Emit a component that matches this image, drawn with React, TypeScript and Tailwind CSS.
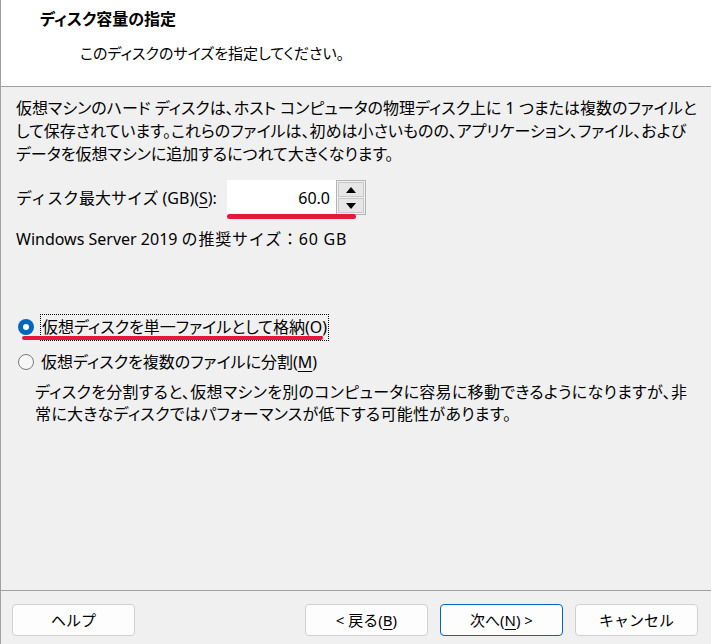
import React from "react";

const font = "font-['Noto_Sans','Noto_Sans_CJK_JP',sans-serif]";

function U({ children }: { children: React.ReactNode }) {
  return <span className="underline underline-offset-[3px] decoration-1">{children}</span>;
}

function Btn({ children, primary }: { children: React.ReactNode; primary?: boolean }) {
  return (
    <div
      className={
        "w-[123px] h-[32px] rounded-[4px] bg-[#fdfdfd] flex items-center justify-center text-[15px] text-black " +
        (primary ? "border border-[#0067c0]" : "border border-[#d0d0d0]")
      }
    >
      {children}
    </div>
  );
}

export default function App() {
  return (
    <div className={"w-[711px] h-[644px] bg-[#f0f0f0] flex flex-col border-l border-[#a0a0a0] text-black overflow-hidden " + font}>
      {/* header */}
      <div className="h-[87px] bg-white border-b border-[#a0a0a0] shrink-0">
        <div className="pl-[39px] pt-[7px] text-[16px] font-bold leading-[24px] [font-feature-settings:'palt']">
          ディスク容量の指定
        </div>
        <div className="pl-[79px] pt-[11px] text-[15px] leading-[22px] [font-feature-settings:'palt']">
          このディスクのサイズを指定してください。
        </div>
      </div>

      {/* body */}
      <div className="flex-1 flex flex-col px-[15px] text-[16px] [font-feature-settings:'palt']">
        <div className="mt-[10px] leading-[23px] whitespace-nowrap">
          <div>仮想マシンのハード ディスクは、ホスト コンピュータの物理ディスク上に 1 つまたは複数のファイルと</div>
          <div>して保存されています。これらのファイルは、初めは小さいものの、アプリケーション、ファイル、および</div>
          <div>データを仮想マシンに追加するにつれて大きくなります。</div>
        </div>

        <div className="mt-[14px] h-[36px] flex items-center">
          <span className="w-[211px] leading-[23px] whitespace-nowrap [font-feature-settings:normal]">
            ディスク最大サイズ (GB)(<U>S</U>):
          </span>
          <div className="relative flex h-[36px]">
            <div className="w-[109px] h-[35px] bg-white flex items-center justify-end pr-[6px] text-[16px]">60.0</div>
            <div className="w-[30px] h-[35px] border border-[#b4b4b4] bg-[#f0f0f0] flex flex-col p-[1px] gap-[1px]">
              <div className="flex-1 bg-[#e6e6e6] border border-[#c8c8c8] flex items-center justify-center">
                <svg width="10" height="6" viewBox="0 0 10 6"><path d="M0 6 L5 0 L10 6 Z" fill="#000" /></svg>
              </div>
              <div className="flex-1 bg-[#e6e6e6] border border-[#c8c8c8] flex items-center justify-center">
                <svg width="10" height="6" viewBox="0 0 10 6"><path d="M0 0 L5 6 L10 0 Z" fill="#000" /></svg>
              </div>
            </div>
            <div className="absolute left-0 top-[34px] w-[129px] h-[5px] rounded-full bg-[#e5173a]" />
          </div>
        </div>

        <div className="mt-[12px] leading-[23px] whitespace-nowrap [font-feature-settings:normal]">
          Windows Server 2019 <span className="tracking-[0.8px]">の推奨サイズ：60 GB</span>
        </div>

        <div className="mt-[62px] h-[28px] flex items-center relative">
          <div className="ml-[2px] w-[16px] h-[16px] rounded-full bg-[#0067c0] flex items-center justify-center">
            <div className="w-[6px] h-[6px] rounded-full bg-white" />
          </div>
          <div className="ml-[6px] h-[27px] px-[1px] border border-dotted border-black flex items-center leading-[23px]">
            仮想ディスクを単一ファイルとして格納(<U>O</U>)
          </div>
          <div className="absolute left-[6px] top-[23px] w-[301px] h-[4px] rounded-full bg-[#e5173a]" />
        </div>

        <div className="mt-[7px] h-[28px] flex items-center">
          <div className="ml-[2px] w-[16px] h-[16px] rounded-full border border-[#7a7a7a] bg-[#f7f7f7]" />
          <div className="ml-[7px] leading-[23px]">
            仮想ディスクを複数のファイルに分割(<U>M</U>)
          </div>
        </div>

        <div className="mt-[5px] pl-[19px] leading-[22px] whitespace-nowrap tracking-[0.3px]">
          <div>ディスクを分割すると、仮想マシンを別のコンピュータに容易に移動できるようになりますが、非</div>
          <div>常に大きなディスクではパフォーマンスが低下する可能性があります。</div>
        </div>
      </div>

      {/* footer */}
      <div className="h-[54px] shrink-0 border-t border-[#a0a0a0] flex items-start pt-[13px] pl-[11px] pr-[13px]">
        <Btn>ヘルプ</Btn>
        <div className="flex-1" />
        <div className="flex gap-[12px]">
          <Btn>&lt; 戻る(<U>B</U>)</Btn>
          <Btn primary>次へ(<U>N</U>) &gt;</Btn>
          <Btn>キャンセル</Btn>
        </div>
      </div>
    </div>
  );
}
